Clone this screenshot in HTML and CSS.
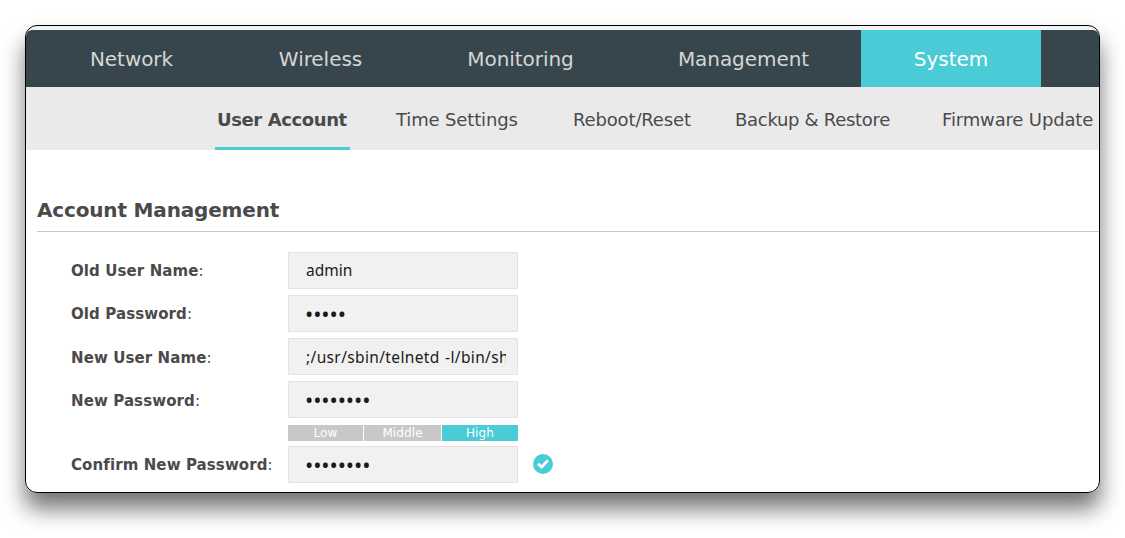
FILE: index.html
```html
<!DOCTYPE html>
<html lang="en">
<head>
<meta charset="utf-8">
<title>System - User Account</title>
<link rel="stylesheet" href="styles.css">
</head>
<body>
<main class="window">
  <nav class="nav">
    <a>Network</a><a>Wireless</a><a>Monitoring</a><a>Management</a><a class="nav-active">System</a>
  </nav>
  <nav class="subnav">
    <a class="subnav-active">User Account</a><a>Time Settings</a><a>Reboot/Reset</a><a class="backup">Backup &amp; Restore</a><a>Firmware Update</a>
  </nav>
  <section class="account">
    <h1 class="title">Account Management</h1>
    <div class="form">
      <div class="row"><div class="label"><b>Old User Name</b>:</div><div class="field"><span class="value">admin</span></div></div>
      <div class="row"><div class="label"><b>Old Password</b>:</div><div class="field"><span class="value dots">•••••</span></div></div>
      <div class="row"><div class="label label-new"><b>New User Name</b>:</div><div class="field"><span class="value command">;/usr/sbin/telnetd -l/bin/sh</span></div></div>
      <div class="row"><div class="label label-new"><b>New Password</b>:</div><div class="field"><span class="value dots">••••••••</span></div></div>
      <div class="strength"><span>Low</span><span>Middle</span><span class="strength-on">High</span></div>
      <div class="row"><div class="label"><b>Confirm New Password</b>:</div><div class="field"><span class="value dots">••••••••</span></div>
        <svg class="check" viewBox="0 0 20 20"><circle cx="10" cy="10" r="10" fill="#4acbd6"/><path d="M5 9.8 8.6 13 15 6.3" fill="none" stroke="#fff" stroke-width="2.8"/></svg>
      </div>
    </div>
  </section>
</main>
</body>
</html>
```
FILE: styles.css
```css
* { box-sizing: border-box; }
body {
  margin: 0;
  padding: 25px;
  height: 538px;
  overflow: hidden;
  background: #fff;
  font-family: "DejaVu Sans", sans-serif;
  color: #4a4a4a;
}
.window {
  width: 1075px;
  height: 468px;
  padding-top: 4px;
  border: 1px solid #000;
  border-radius: 12px;
  overflow: hidden;
  background: linear-gradient(#f1f3f4 4px, #fff 4px);
  box-shadow: 0 16px 22px rgba(0, 0, 0, 0.54);
}
.nav {
  display: grid;
  grid-template-columns: 189px 189px 211px 235px 180px;
  grid-template-rows: 57px;
  height: 57px;
  padding-left: 11px;
  border-radius: 6px 6px 0 0;
  background: #37464d;
  color: #d6d6d6;
  font-size: 20px;
  line-height: 58px;
  letter-spacing: -0.05px;
  text-align: center;
}
.nav-active { background: #4acbd6; color: #fff; }
.subnav {
  display: grid;
  grid-template-columns: 181px 177px 162px 207px 158px;
  grid-template-rows: 63px;
  height: 63px;
  padding-left: 189px;
  background: #eaeaea;
  font-size: 18px;
  line-height: 65px;
  letter-spacing: -0.15px;
  white-space: nowrap;
}
.subnav-active {
  width: 135px;
  padding-left: 2px;
  border-bottom: 3px solid #4acbd6;
  font-weight: bold;
  letter-spacing: -0.4px;
}
.backup { letter-spacing: -0.3px; }
.account { padding: 44px 0 0 11px; }
.title {
  margin: 0;
  height: 38px;
  border-bottom: 1px solid #c8c8c8;
  font-size: 20px;
  line-height: 32px;
  letter-spacing: -0.17px;
}
.form {
  display: flex;
  flex-direction: column;
  gap: 6px;
  padding: 20px 0 0 34px;
}
.row { display: flex; height: 37px; align-items: center; }
.label { width: 217px; font-size: 15px; letter-spacing: 0.1px; white-space: nowrap; }
.label-new { padding-top: 2px; }
.field {
  width: 230px;
  height: 37px;
  padding: 0 11px 0 17px;
  border: 1px solid #e3e3e3;
  background: #f1f1f1;
  color: #1a1a1a;
  font-family: "Noto Sans", sans-serif;
  font-size: 15.5px;
  line-height: 35px;
}
.value { display: block; height: 35px; overflow: hidden; white-space: nowrap; }
.command { letter-spacing: 0.36px; word-spacing: 1px; line-height: 36px; }
.dots { font-size: 22px; letter-spacing: -0.1px; line-height: 34px; text-indent: -1px; }
.strength {
  display: grid;
  grid-template-columns: 75px 77px 76px;
  gap: 1px;
  height: 16px;
  margin: 1px 0 -1px 217px;
  color: #fff;
  font-size: 12px;
  line-height: 16px;
  letter-spacing: 0.1px;
  text-align: center;
}
.strength span { background: #c8c8c8; }
.strength .strength-on { background: #4acbd6; }
.check { width: 20px; height: 20px; margin: -1px 0 0 15px; }
```
